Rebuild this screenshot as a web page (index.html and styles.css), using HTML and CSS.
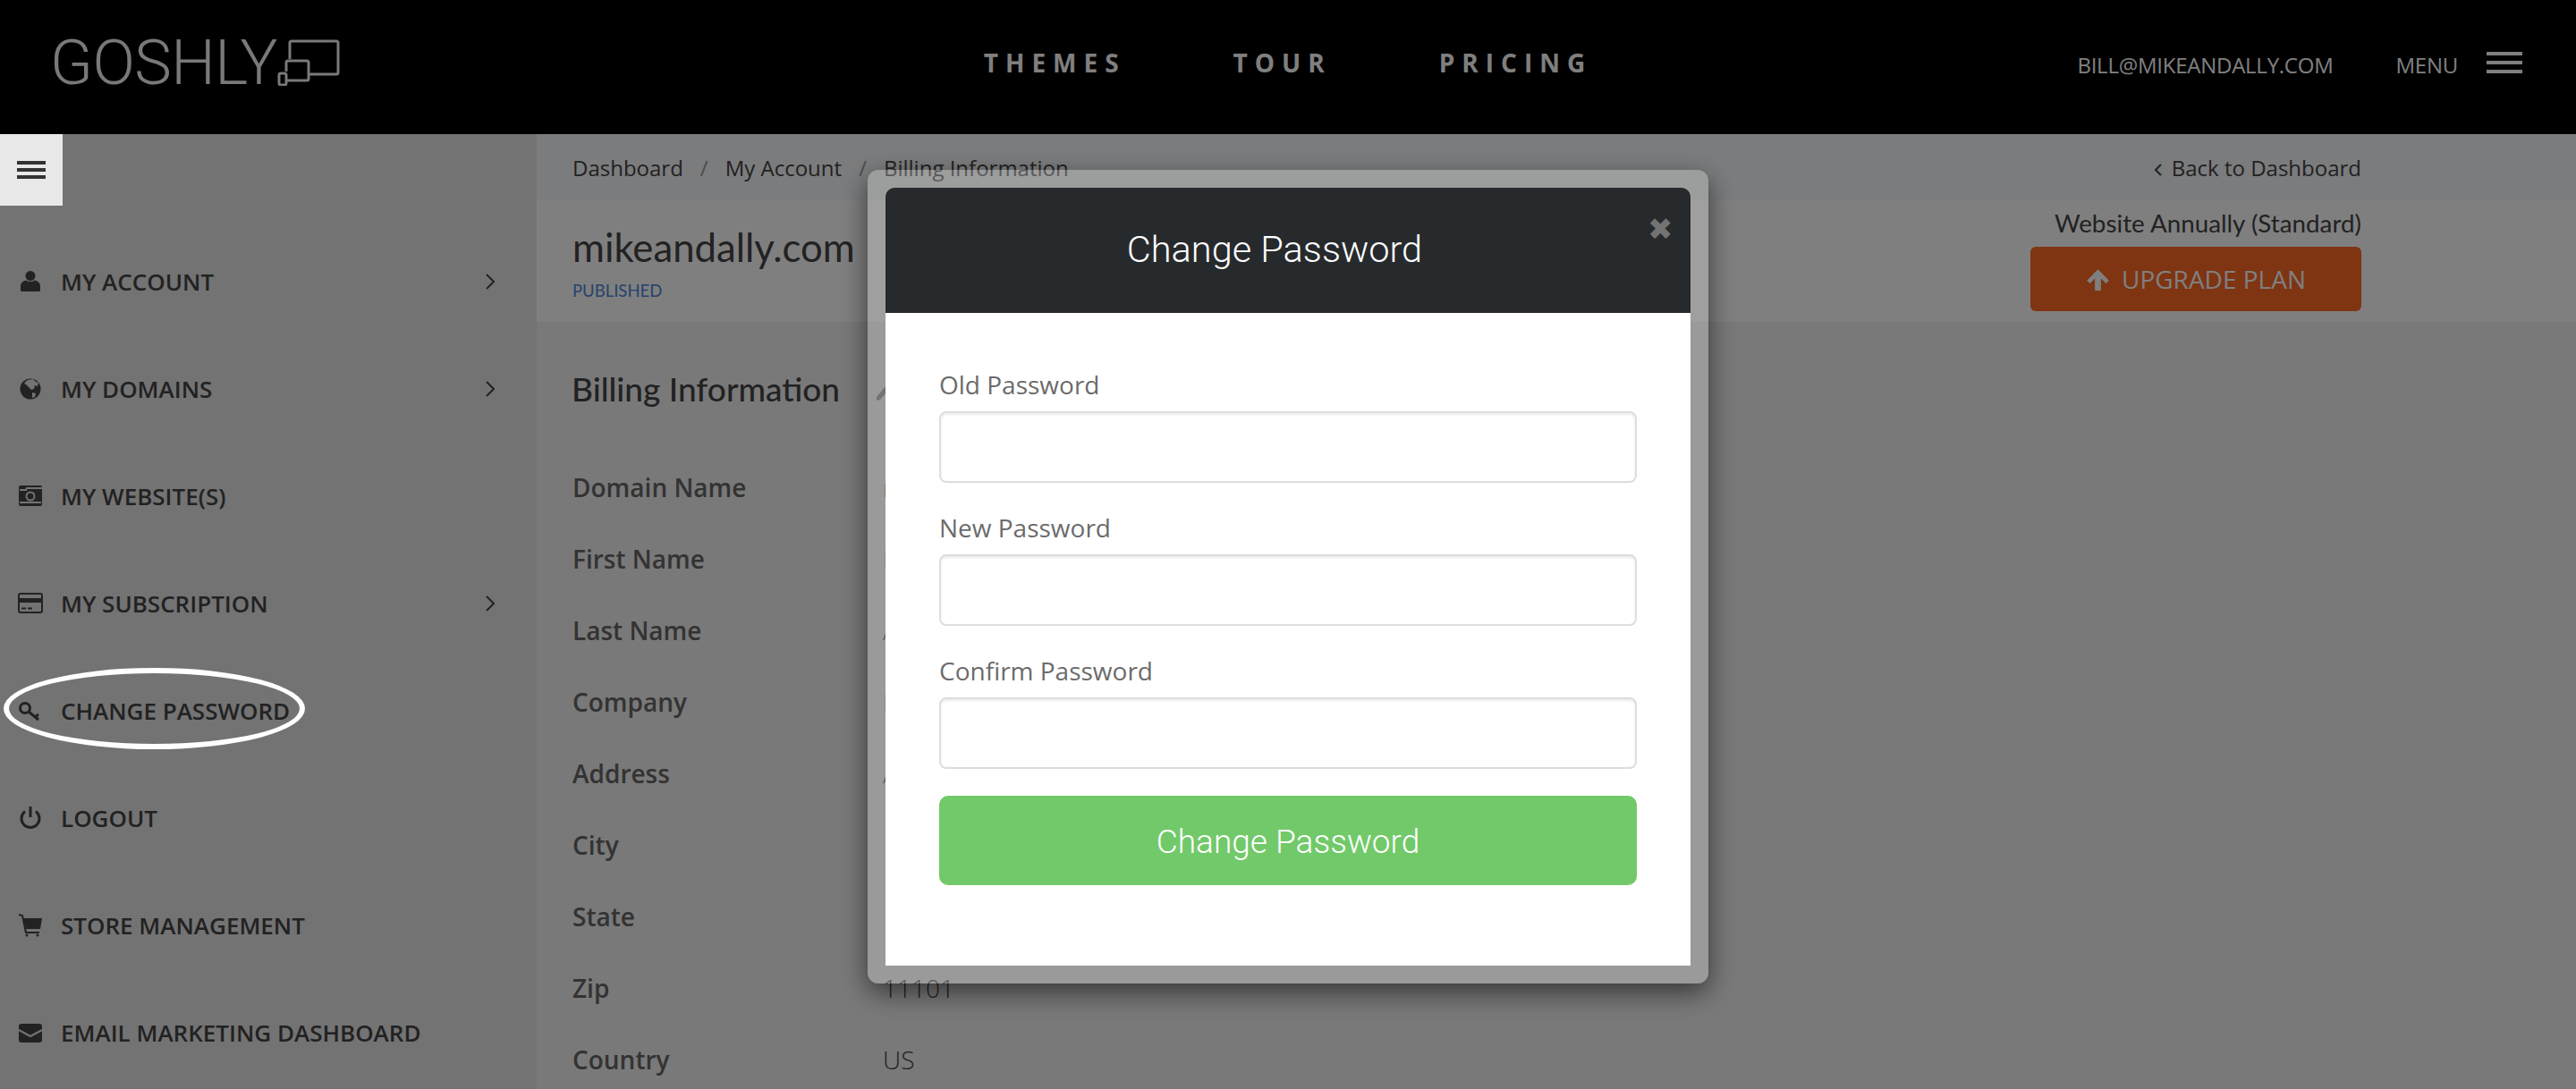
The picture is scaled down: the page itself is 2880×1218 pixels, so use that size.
FILE: index.html
```html
<!DOCTYPE html>
<html lang="en">
<head>
    <meta charset="UTF-8">
    <title>Billing Information</title>
    <link rel="stylesheet" href="styles.css">
</head>
<body>
<header class="topbar">
    <a class="logo">
        <span class="logo-word">GOSHLY</span>
        <svg class="logo-devices" width="70" height="52" viewBox="0 0 70 52" fill="none" stroke="#f2f2f2" stroke-width="3">
            <path d="M14 22V4a2 2 0 0 1 2-2h50a2 2 0 0 1 2 2v33a2 2 0 0 1-2 2H35"/>
            <path d="M10 36V26a2 2 0 0 1 2-2h21a2 2 0 0 1 2 2v18a2 2 0 0 1-2 2H11"/>
            <rect x="2" y="38" width="8" height="13" rx="2"/>
        </svg>
    </a>
    <nav class="topnav">
        <a>THEMES</a>
        <a>TOUR</a>
        <a>PRICING</a>
    </nav>
    <div class="account">
        <span class="account-mail">BILL@MIKEANDALLY.COM</span>
        <span class="account-menu">MENU</span>
        <span class="burger"><i></i><i></i><i></i></span>
    </div>
</header>

<div class="page">
    <aside class="sidebar">
        <div class="toggle"><i></i><i></i><i></i></div>
        <ul class="sidenav">
            <li>
                <svg class="icon" viewBox="0 0 30 30"><circle cx="15" cy="8.5" r="5.5"/><path d="M5 26q-1 0-1-2v-4q0-5 6-6.500q5 3 10 0 6 1.500 6 6.500v4q0 2-1 2z"/></svg>
                <span>MY ACCOUNT</span>
                <svg class="chevron" viewBox="0 0 10 18"><path d="M1 1l8 8-8 8"/></svg>
            </li>
            <li>
                <svg class="icon" viewBox="0 0 30 30"><circle cx="15" cy="15" r="11.500"/><path class="cut" d="M12 5l6-1 3 3 3 1-1 4-3-1-1 4-3 1-3-3-3-3-2-1q2-3 5-5zM17 19l4 1-1 4-3 1z"/></svg>
                <span>MY DOMAINS</span>
                <svg class="chevron" viewBox="0 0 10 18"><path d="M1 1l8 8-8 8"/></svg>
            </li>
            <li>
                <svg class="icon" viewBox="0 0 30 30"><rect x="2" y="3" width="26" height="23" rx="2"/><path class="cut-line" d="M3 8h7l1-2h17M3 22h24"/><circle class="cut-line" cx="15" cy="15" r="4.500"/></svg>
                <span>MY WEBSITE(S)</span>
            </li>
            <li>
                <svg class="icon" viewBox="0 0 30 30"><rect class="outline" x="2" y="4" width="26" height="21" rx="2"/><rect x="2" y="9" width="26" height="5"/><path class="dark-line" d="M5 20.500h5M12 20.500h5"/></svg>
                <span>MY SUBSCRIPTION</span>
                <svg class="chevron" viewBox="0 0 10 18"><path d="M1 1l8 8-8 8"/></svg>
            </li>
            <li class="marked">
                <svg class="icon" viewBox="0 0 30 30"><circle class="outline thick" cx="9" cy="12" r="5.500"/><path class="dark-line thick" d="M13 16l11 9M20 22l4-3"/></svg>
                <span>CHANGE PASSWORD</span>
            </li>
            <li>
                <svg class="icon" viewBox="0 0 30 30"><path class="dark-line thick" d="M9 7.500a10 10 0 1 0 12 0M15 2v12"/></svg>
                <span>LOGOUT</span>
            </li>
            <li>
                <svg class="icon" viewBox="0 0 30 30"><path d="M7 7h21l-2 12H10z"/><path class="dark-line" d="M2 3l4 1 4 19h15"/><circle cx="11" cy="26" r="1.500"/><circle cx="23" cy="26" r="1.500"/></svg>
                <span>STORE MANAGEMENT</span>
            </li>
            <li>
                <svg class="icon" viewBox="0 0 30 30"><rect x="2" y="5" width="26" height="21" rx="3"/><path class="cut-line" d="M2 12l13 7 13-7"/></svg>
                <span>EMAIL MARKETING DASHBOARD</span>
            </li>
        </ul>
    </aside>

    <main class="content">
        <div class="crumbbar">
            <div class="crumbs">
                <a>Dashboard</a><em>/</em><a>My Account</a><em>/</em><a>Billing Information</a>
            </div>
            <a class="back"><svg viewBox="0 0 8 14"><path d="M7 1L1 7l6 6"/></svg>Back to Dashboard</a>
        </div>
        <div class="siteband">
            <div>
                <h1>mikeandally.com</h1>
                <div class="status">PUBLISHED</div>
            </div>
            <div class="plan">
                <div class="plan-name">Website Annually (Standard)</div>
                <a class="upgrade">
                    <svg viewBox="0 0 24 24"><path d="M12 2l11 11-3 3-5-5v12H9V11l-5 5-3-3z"/></svg>UPGRADE PLAN
                </a>
            </div>
        </div>
        <section class="billing">
            <h2>Billing Information <svg class="pencil" viewBox="0 0 16 18"><path d="M1 13L11 1l4 3L5 16l-4 1z"/></svg></h2>
            <dl class="rows">
                <dt>Domain Name</dt><dd>mikeandally.com</dd>
                <dt>First Name</dt><dd>Bill</dd>
                <dt>Last Name</dt><dd>Ally</dd>
                <dt>Company</dt><dd>Mike</dd>
                <dt>Address</dt><dd>A</dd>
                <dt>City</dt><dd></dd>
                <dt>State</dt><dd></dd>
                <dt>Zip</dt><dd>11101</dd>
                <dt>Country</dt><dd>US</dd>
            </dl>
        </section>
    </main>
</div>

<div class="backdrop"></div>

<div class="modal">
    <div class="modal-head">
        <h3>Change Password</h3>
        <span class="close">&#10006;</span>
    </div>
    <form class="modal-body">
        <label>Old Password</label>
        <input type="password">
        <label>New Password</label>
        <input type="password">
        <label>Confirm Password</label>
        <input type="password">
        <button type="button">Change Password</button>
    </form>
</div>
</body>
</html>
```

FILE: styles.css
```css
* {
    margin: 0;
    padding: 0;
    box-sizing: border-box;
}

html, body {
    height: 100%;
    overflow: hidden;
}

body {
    font-family: "Open Sans", sans-serif;
    color: #444;
    background-color: #f2f2f2;
}

/* top bar */
.topbar {
    height: 150px;
    background-color: #000;
    color: #fff;
    display: grid;
    grid-template-columns: 1fr auto 1fr;
    align-items: center;
    padding: 0 60px;
}

.logo {
    display: flex;
    align-items: flex-end;
    height: 52px;
    margin-top: -12px;
    margin-left: -4px;
    color: #f2f2f2;
}

.logo-word {
    font-family: Roboto, sans-serif;
    font-weight: 300;
    font-size: 70px;
    line-height: 50px;
    letter-spacing: -.5px;
    width: 254px;
    height: 50px;
}

.logo-devices {
    margin-bottom: -1px;
    flex-shrink: 0;
}

.topnav {
    display: flex;
    gap: 120px;
    margin-top: -10px;
}

.topnav a {
    font-weight: 700;
    font-size: 28px;
    letter-spacing: 8px;
    text-shadow: 0 2px 3px #000;
}

.account {
    display: flex;
    justify-content: flex-end;
    align-items: center;
    font-size: 24px;
    letter-spacing: -.25px;
    margin-top: -6px;
}

.account-menu {
    margin-left: 70px;
}

.burger {
    display: flex;
    flex-direction: column;
    gap: 6px;
    margin-left: 32px;
    width: 40px;
    margin-top: -4px;
}

.burger i {
    display: block;
    height: 4px;
    background-color: #fff;
}

/* sidebar */
.page {
    display: flex;
    height: 1068px;
}

.sidebar {
    width: 600px;
    flex-shrink: 0;
    background-color: #e6e6e6;
}

.toggle {
    position: relative;
    z-index: 20;
    width: 70px;
    height: 80px;
    background-color: #e8e8e8;
    display: flex;
    flex-direction: column;
    justify-content: center;
    gap: 4px;
    padding-left: 19px;
}

.toggle i {
    display: block;
    width: 32px;
    height: 4px;
    background-color: #333;
}

.sidenav {
    list-style: none;
    margin-top: 25px;
}

.sidenav li {
    position: relative;
    height: 120px;
    display: flex;
    align-items: center;
    padding-left: 19px;
    font-weight: 600;
    font-size: 26px;
}

.sidenav li span {
    margin-left: 19px;
    margin-top: -1px;
}

.icon {
    width: 30px;
    height: 30px;
    fill: #444;
    flex-shrink: 0;
}

.icon .cut {
    fill: #e6e6e6;
}

.icon .cut-line {
    fill: none;
    stroke: #e6e6e6;
    stroke-width: 2;
}

.icon .outline {
    fill: none;
    stroke: #444;
    stroke-width: 2;
}

.icon .dark-line {
    fill: none;
    stroke: #444;
    stroke-width: 2;
}

.icon .thick {
    stroke-width: 3;
}

.chevron {
    position: absolute;
    left: 543px;
    top: 51px;
    width: 10px;
    height: 18px;
    fill: none;
    stroke: #444;
    stroke-width: 2;
}

.marked::after {
    content: "";
    position: absolute;
    z-index: 20;
    left: 4px;
    top: 12px;
    width: 337px;
    height: 91px;
    box-sizing: border-box;
    border: 6px solid #fff;
    border-radius: 50%;
}

/* main column */
.content {
    flex: 1;
}

.crumbbar {
    height: 74px;
    padding: 0 240px 0 40px;
    background-color: #f6f8fa;
    display: flex;
    justify-content: space-between;
    align-items: center;
    font-size: 24px;
}

.crumbs em {
    font-style: normal;
    color: #999;
    margin: 0 19px;
}

.back svg {
    width: 8px;
    height: 14px;
    margin-right: 11px;
    fill: none;
    stroke: #444;
    stroke-width: 2;
}

.siteband {
    height: 136px;
    padding: 0 240px 0 40px;
    background-color: #fff;
    display: flex;
    justify-content: space-between;
}

.siteband h1 {
    font-family: Lato, sans-serif;
    font-weight: 400;
    font-size: 43.7px;
    line-height: 56px;
    margin-top: 24px;
}

.status {
    font-family: Lato, sans-serif;
    font-size: 18.5px;
    line-height: 24px;
    margin-top: 9px;
    color: #4c86d8;
}

.plan {
    display: flex;
    flex-direction: column;
    align-items: flex-end;
    padding-top: 8px;
}

.plan-name {
    font-family: Lato, sans-serif;
    font-size: 27.8px;
    line-height: 36px;
    margin-bottom: 8px;
}

.upgrade {
    width: 370px;
    height: 72px;
    border-radius: 6px;
    background-color: #fe6824;
    color: #fff;
    display: flex;
    justify-content: center;
    align-items: center;
    font-size: 28px;
}

.upgrade svg {
    width: 27px;
    height: 27px;
    margin-right: 13px;
    fill: #fff;
}

.billing {
    padding: 48px 40px 0;
}

.billing h2 {
    font-family: Lato, sans-serif;
    font-weight: 500;
    font-size: 37px;
    line-height: 54px;
    margin-left: -1px;
}

.pencil {
    width: 16px;
    height: 18px;
    margin-left: 31px;
    fill: #888;
}

.rows {
    display: grid;
    grid-template-columns: 347px 1fr;
    grid-auto-rows: 80px;
    align-items: center;
    margin-top: 43px;
    font-size: 28px;
}

.rows dt {
    font-weight: 600;
    color: #666;
}

.rows dd {
    font-weight: 300;
}

/* modal */
.backdrop {
    position: fixed;
    z-index: 10;
    left: 0;
    top: 0;
    right: 0;
    bottom: 0;
    background-color: rgba(0, 0, 0, .5);
}

.modal {
    position: fixed;
    z-index: 30;
    left: 970px;
    top: 190px;
    width: 940px;
    padding: 20px;
    border-radius: 12px;
    background-color: rgba(255, 255, 255, .25);
    box-shadow: 0 10px 30px rgba(0, 0, 0, .55);
}

.modal-head {
    position: relative;
    height: 140px;
    border-radius: 10px 10px 0 0;
    background-color: #272a2d;
    display: flex;
    align-items: center;
    padding: 0 30px 4px 0;
}

.modal-head h3 {
    flex: 1;
    text-align: center;
    font-family: Roboto, sans-serif;
    font-weight: 300;
    font-size: 41.5px;
    color: #fff;
}

.close {
    position: absolute;
    right: 20px;
    top: 22px;
    font-size: 34px;
    color: #737373;
}

.modal-body {
    display: flex;
    flex-direction: column;
    padding: 60px 60px 90px;
    background-color: #fff;
}

.modal-body label {
    height: 40px;
    line-height: 40px;
    margin-bottom: 10px;
    font-size: 28px;
    color: #6b6b6b;
}

.modal-body input {
    height: 80px;
    margin-bottom: 30px;
    border: 2px solid #ddd;
    border-radius: 8px;
    box-shadow: inset 0 2px 3px rgba(0, 0, 0, .08);
}

.modal-body button {
    height: 100px;
    border: 0;
    border-radius: 10px;
    padding-top: 2px;
    background-color: #72c96a;
    color: #fff;
    font-family: Roboto, sans-serif;
    font-weight: 300;
    font-size: 37px;
}
```
